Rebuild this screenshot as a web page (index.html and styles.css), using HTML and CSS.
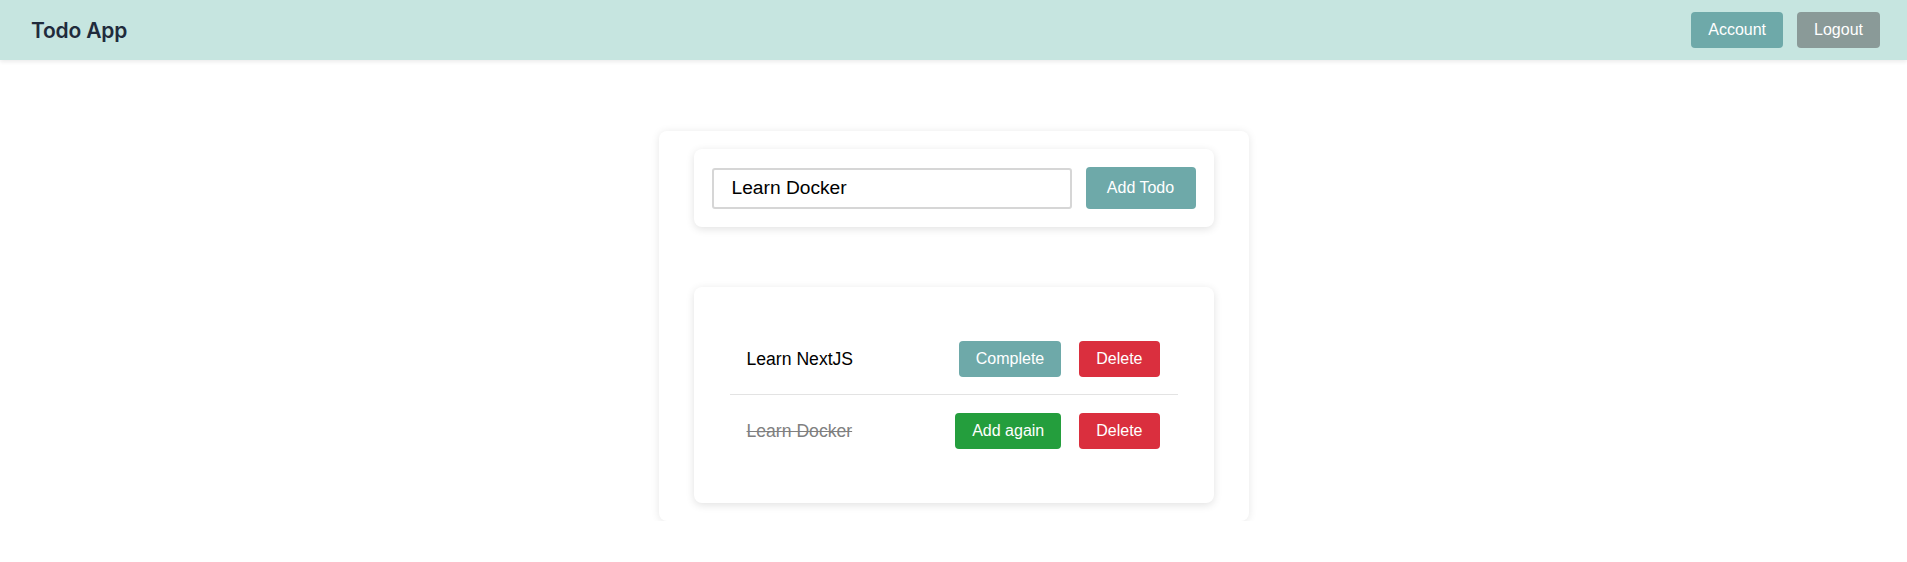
FILE: index.html
```html
<!DOCTYPE html>
<html lang="en">
<head>
<meta charset="utf-8">
<title>Todo App</title>
<link rel="stylesheet" href="styles.css">
</head>
<body>
<header class="topbar">
  <div class="brand">Todo App</div>
  <nav class="nav">
    <button class="btn btn-teal">Account</button>
    <button class="btn btn-gray">Logout</button>
  </nav>
</header>
<main class="main">
  <section class="panel">
    <form class="card add-form">
      <input class="todo-input" type="text" value="Learn Docker">
      <button type="button" class="btn btn-teal btn-add">Add Todo</button>
    </form>
    <div class="card list-card">
      <ul class="todo-list">
        <li class="todo-item">
          <span class="todo-text">Learn NextJS</span>
          <div class="actions">
            <button class="btn btn-teal">Complete</button>
            <button class="btn btn-red">Delete</button>
          </div>
        </li>
        <li class="todo-item">
          <span class="todo-text done">Learn Docker</span>
          <div class="actions">
            <button class="btn btn-green">Add again</button>
            <button class="btn btn-red">Delete</button>
          </div>
        </li>
      </ul>
    </div>
  </section>
</main>
</body>
</html>
```
FILE: styles.css
```css
* { box-sizing: border-box; }
html, body { margin: 0; padding: 0; background: #ffffff; }
body { font-family: "Liberation Sans", Arial, sans-serif; color: #000; }

.topbar {
  height: 60px;
  background: #c6e5e0;
  display: flex;
  align-items: center;
  justify-content: space-between;
  padding: 0 27px 0 31px;
  box-shadow: 0 2px 4px rgba(0,0,0,0.08);
}
.brand {
  font-family: Inter, "Liberation Sans", sans-serif;
  font-weight: 600;
  font-size: 21px;
  color: #1f2b3c;
  letter-spacing: -0.2px;
}
.nav { display: flex; gap: 14px; }

.btn {
  font-family: "Liberation Sans", Arial, sans-serif;
  font-size: 16px;
  color: #fff;
  border: none;
  border-radius: 4px;
  height: 36px;
  padding: 0 17px;
  cursor: pointer;
  line-height: 36px;
}
.btn-teal { background: #6ea9a9; }
.btn-gray { background: #8a9a98; }
.btn-red { background: #da2f3e; }
.btn-green { background: #249e3d; }

.main { padding-top: 71px; }
.panel {
  width: 590px;
  margin: 0 auto;
  background: #fff;
  border-radius: 8px;
  box-shadow: 0 1px 8px rgba(0,0,0,0.10);
  padding: 18px 35px;
  display: flex;
  flex-direction: column;
  gap: 60px;
}
.card {
  background: #fff;
  border-radius: 8px;
  box-shadow: 0 2px 8px rgba(0,0,0,0.12);
}
.add-form {
  margin: 0;
  padding: 18px;
  display: flex;
  gap: 14px;
  align-items: center;
}
.todo-input {
  width: 360px;
  height: 41px;
  border: 2px solid #d6d6d6;
  border-radius: 3px;
  padding: 0 18px;
  font-family: "Liberation Sans", Arial, sans-serif;
  font-size: 19.2px;
  color: #000;
  outline: none;
}
.btn-add { width: 110px; height: 42px; padding: 0; line-height: 42px; }

.list-card { padding: 36px; }
.todo-list { list-style: none; margin: 0; padding: 0; }
.todo-item {
  display: flex;
  align-items: center;
  justify-content: space-between;
  padding: 18px 18px 17px 17px;
}
.todo-item + .todo-item { border-top: 1px solid #e3e3e3; padding-top: 18px; padding-bottom: 18px; }
.todo-text { font-size: 17.6px; }
.todo-text.done { color: #808080; text-decoration: line-through; }
.actions { display: flex; gap: 18px; }
```
